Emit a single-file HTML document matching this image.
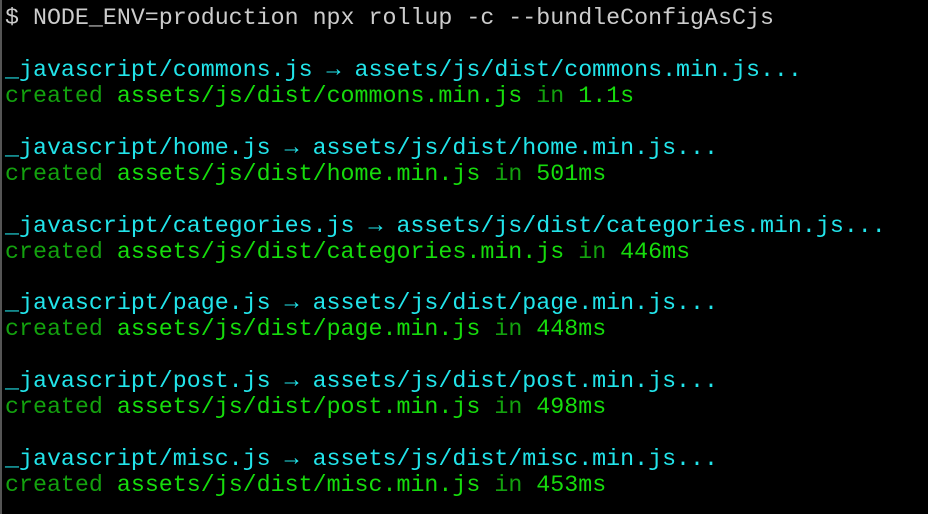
<!DOCTYPE html>
<html><head><meta charset="utf-8"><style>
html,body{margin:0;padding:0;background:#000;width:928px;height:514px;overflow:hidden}
body{border-left:2px solid #555;box-sizing:border-box}
pre{margin:0;padding:6px 0 0 3px;font-family:"Liberation Mono",monospace;font-size:23.3px;line-height:25.95px;color:#cccccc;white-space:pre}
.c{color:#22e4ea}.d{color:#13a10e}.g{color:#16dc0c}
</style></head><body><pre>$ NODE_ENV=production npx rollup -c --bundleConfigAsCjs

<span class="c">_javascript/commons.js → assets/js/dist/commons.min.js...</span>
<span class="d">created</span> <span class="g">assets/js/dist/commons.min.js</span> <span class="d">in</span> <span class="g">1.1s</span>

<span class="c">_javascript/home.js → assets/js/dist/home.min.js...</span>
<span class="d">created</span> <span class="g">assets/js/dist/home.min.js</span> <span class="d">in</span> <span class="g">501ms</span>

<span class="c">_javascript/categories.js → assets/js/dist/categories.min.js...</span>
<span class="d">created</span> <span class="g">assets/js/dist/categories.min.js</span> <span class="d">in</span> <span class="g">446ms</span>

<span class="c">_javascript/page.js → assets/js/dist/page.min.js...</span>
<span class="d">created</span> <span class="g">assets/js/dist/page.min.js</span> <span class="d">in</span> <span class="g">448ms</span>

<span class="c">_javascript/post.js → assets/js/dist/post.min.js...</span>
<span class="d">created</span> <span class="g">assets/js/dist/post.min.js</span> <span class="d">in</span> <span class="g">498ms</span>

<span class="c">_javascript/misc.js → assets/js/dist/misc.min.js...</span>
<span class="d">created</span> <span class="g">assets/js/dist/misc.min.js</span> <span class="d">in</span> <span class="g">453ms</span></pre></body></html>
